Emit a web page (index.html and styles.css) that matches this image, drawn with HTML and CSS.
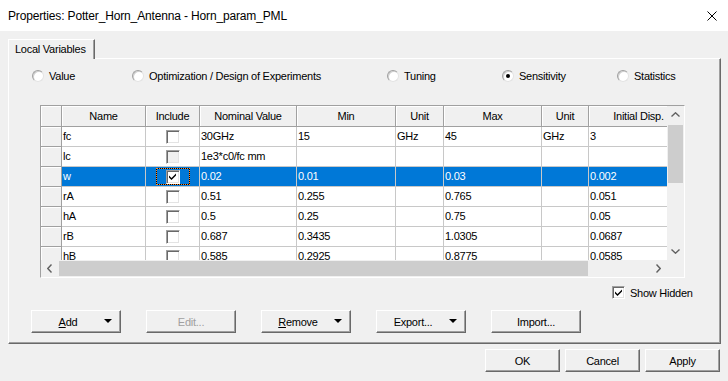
FILE: index.html
```html
<!DOCTYPE html>
<html lang="en">
<head>
  <meta charset="UTF-8" />
  <meta name="viewport" content="width=device-width, initial-scale=1.0"/>
  <title>Properties: Potter_Horn_Antenna - Horn_param_PML</title>
  <link rel="stylesheet" href="styles.css">
</head>
<body>
  <div class="dialog">
    <div class="titlebar">
      <span>Properties: Potter_Horn_Antenna - Horn_param_PML</span>
      <svg class="close" width="10" height="10" viewBox="0 0 10 10"><path d="M0.5 0.5 L9.5 9.5 M9.5 0.5 L0.5 9.5" stroke="#000" stroke-width="1"/></svg>
    </div>

    <div class="tabs">
      <div class="tab">Local Variables</div>
    </div>

    <div class="panel">
      <div class="modes">
        <label class="radio"><span class="dot"></span>Value</label>
        <label class="radio"><span class="dot"></span>Optimization / Design of Experiments</label>
        <label class="radio"><span class="dot"></span>Tuning</label>
        <label class="radio"><span class="dot on"></span>Sensitivity</label>
        <label class="radio"><span class="dot"></span>Statistics</label>
      </div>

      <div class="grid-frame">
        <div class="grid-view">
          <div id="grid-table" class="grid-table"></div>
        </div>
        <div class="vscroll">
          <div class="sb-btn"><svg width="9" height="5" viewBox="0 0 9 5"><polyline points="0.5,4.5 4.5,0.8 8.5,4.5" fill="none" stroke="#606060" stroke-width="1.4"/></svg></div>
          <div class="vthumb"></div>
          <div class="sb-fill"></div>
          <div class="sb-btn"><svg width="9" height="5" viewBox="0 0 9 5"><polyline points="0.5,0.5 4.5,4.2 8.5,0.5" fill="none" stroke="#606060" stroke-width="1.4"/></svg></div>
        </div>
        <div class="hscroll">
          <div class="sb-btn"><svg width="5" height="9" viewBox="0 0 5 9"><polyline points="4.5,0.5 0.8,4.5 4.5,8.5" fill="none" stroke="#606060" stroke-width="1.4"/></svg></div>
          <div class="hthumb"></div>
          <div class="sb-fill"></div>
          <div class="sb-btn"><svg width="5" height="9" viewBox="0 0 5 9"><polyline points="0.5,0.5 4.2,4.5 0.5,8.5" fill="none" stroke="#606060" stroke-width="1.4"/></svg></div>
        </div>
        <div class="corner"></div>
      </div>

      <div class="show-hidden">
        <span class="cb checked"><svg width="8" height="7" viewBox="0 0 8 7"><path d="M0 2.5 L2.5 5 L7 0.5 L7 2.5 L2.5 7 L0 4.5 Z"/></svg></span>
        Show Hidden
      </div>

      <div class="actions">
        <div class="btn drop"><span class="label"><u>A</u>dd</span><span class="caret"></span></div>
        <div class="btn disabled"><span class="label">Edit...</span></div>
        <div class="btn drop"><span class="label"><u>R</u>emove</span><span class="caret"></span></div>
        <div class="btn drop"><span class="label">Export...</span><span class="caret"></span></div>
        <div class="btn"><span class="label">Import...</span></div>
      </div>
    </div>

    <div class="footer">
      <div class="btn small"><span class="label">OK</span></div>
      <div class="btn small"><span class="label">Cancel</span></div>
      <div class="btn small"><span class="label">Apply</span></div>
    </div>
  </div>

  <script>
    const columns = ['Name', 'Include', 'Nominal Value', 'Min', 'Unit', 'Max', 'Unit', 'Initial Disp.'];

    const variables = [
      { name: 'fc', include: 'off', values: ['30GHz', '15', 'GHz', '45', 'GHz', '3'] },
      { name: 'lc', include: 'disabled', values: ['1e3*c0/fc mm', '', '', '', '', ''] },
      { name: 'w', include: 'on', selected: true, values: ['0.02', '0.01', '', '0.03', '', '0.002'] },
      { name: 'rA', include: 'off', values: ['0.51', '0.255', '', '0.765', '', '0.051'] },
      { name: 'hA', include: 'off', values: ['0.5', '0.25', '', '0.75', '', '0.05'] },
      { name: 'rB', include: 'off', values: ['0.687', '0.3435', '', '1.0305', '', '0.0687'] },
      { name: 'hB', include: 'off', values: ['0.585', '0.2925', '', '0.8775', '', '0.0585'] }
    ];

    const tick = '<svg width="8" height="7" viewBox="0 0 8 7"><path d="M0 2.5 L2.5 5 L7 0.5 L7 2.5 L2.5 7 L0 4.5 Z"/></svg>';

    function checkbox(state, focused) {
      const box = `<span class="cb ${state === 'on' ? 'checked' : ''} ${state === 'disabled' ? 'disabled' : ''}">${state === 'on' ? tick : ''}</span>`;
      return focused ? `<span class="focus">${box}</span>` : box;
    }

    function renderGrid() {
      const head = `<div class="row head"><div class="cell"></div>${columns.map(c => `<div class="cell">${c}</div>`).join('')}</div>`;
      const body = variables.map(v => `
        <div class="row ${v.selected ? 'selected' : ''}">
          <div class="cell rh"></div>
          <div class="cell">${v.name}</div>
          <div class="cell inc">${checkbox(v.include, v.selected)}</div>
          ${v.values.map(x => `<div class="cell">${x}</div>`).join('')}
        </div>
      `).join('');
      document.getElementById('grid-table').innerHTML = head + body;
    }

    renderGrid();
  </script>
</body>
</html>
```

FILE: styles.css
```css
body {
  margin: 0;
  background: #f0f0f0;
  font-family: "Liberation Sans", Arial, sans-serif;
  font-size: 11px;
  letter-spacing: -0.25px;
  color: #000;
}
.dialog {
  width: 728px;
  height: 381px;
  overflow: hidden;
}
.titlebar {
  height: 31px;
  background: #fff;
  display: flex;
  align-items: center;
  justify-content: space-between;
  padding: 0 11px 0 8px;
  font-size: 12px;
  letter-spacing: -0.15px;
}

/* tab strip */
.tabs {
  display: flex;
  padding: 8px 0 0 8px;
  margin-bottom: -1px;
}
.tab {
  position: relative;
  z-index: 1;
  width: 87px;
  height: 20px;
  box-sizing: border-box;
  padding-left: 6px;
  line-height: 19px;
  background: #f0f0f0;
  border-top: 1px solid #fff;
  border-left: 1px solid #fff;
  border-right: 1px solid #696969;
  box-shadow: inset -1px 0 #a0a0a0;
}
.panel {
  margin: 0 7px 0 8px;
  border: 1px solid;
  border-color: #fff #696969 #696969 #fff;
  box-shadow: inset -1px -1px #a0a0a0;
  padding-bottom: 10px;
}

/* radio row */
.modes {
  display: grid;
  grid-template-columns: 100px 255px 115px 115px 1fr;
  margin: 10px 0 0 23px;
  height: 14px;
  line-height: 14px;
}
.radio {
  display: flex;
  align-items: center;
  gap: 5px;
  white-space: nowrap;
}
.dot {
  width: 12px;
  height: 12px;
  box-sizing: border-box;
  border-radius: 50%;
  border: 1px solid;
  border-color: #a0a0a0 #e3e3e3 #e3e3e3 #a0a0a0;
  background: #fff;
  box-shadow: inset 1px 1px #d0d0d0;
  display: flex;
  align-items: center;
  justify-content: center;
}
.dot.on::after {
  content: "";
  width: 4px;
  height: 4px;
  border-radius: 50%;
  background: #000;
}

/* variable grid */
.grid-frame {
  margin: 22px 0 0 31px;
  width: 645px;
  height: 173px;
  box-sizing: border-box;
  border: 1px solid;
  border-color: #a0a0a0 #fff #fff #a0a0a0;
  display: grid;
  grid-template-columns: 626px 17px;
  grid-template-rows: 154px 17px;
  background: #f0f0f0;
}
.grid-view {
  overflow: hidden;
  background: #fff;
}
.grid-table {
  width: 648px;
}
.row {
  display: grid;
  grid-template-columns: 21px 84px 54px 97px 99px 48px 98px 47px 100px;
  height: 20px;
}
.row.head {
  height: 21px;
}
.cell {
  box-sizing: border-box;
  border-right: 1px solid #c8c8c8;
  border-bottom: 1px solid #c8c8c8;
  padding: 0 1px;
  line-height: 19px;
  white-space: nowrap;
  overflow: hidden;
  background: #fff;
}
.head .cell {
  background: #f0f0f0;
  border-color: #a0a0a0;
  box-shadow: inset 1px 1px #fff;
  text-align: center;
  line-height: 20px;
}
.cell.rh {
  background: #f0f0f0;
  border-color: #a0a0a0;
  box-shadow: inset 1px 1px #fff;
}
.selected .cell:not(.rh) {
  background: #0078d7;
  color: #fff;
}
.cell.inc {
  display: flex;
  align-items: center;
  justify-content: center;
  padding: 0;
}
.focus {
  width: 34px;
  height: 17px;
  box-sizing: border-box;
  border: 1px dotted #ff8727;
  background: #000;
  box-shadow: inset 0 0 0 20px #0078d7;
  display: flex;
  align-items: center;
  justify-content: center;
}
.cb {
  width: 14px;
  height: 14px;
  box-sizing: border-box;
  border: 1px solid;
  border-color: #a0a0a0 #fff #fff #a0a0a0;
  box-shadow: inset 1px 1px #696969, inset -1px -1px #e3e3e3;
  background: #fff;
  display: flex;
  align-items: center;
  justify-content: center;
}
.cb.disabled {
  background: #f0f0f0;
}
.cb svg {
  fill: #000;
}

/* scrollbars */
.vscroll {
  display: flex;
  flex-direction: column;
}
.hscroll {
  display: flex;
}
.sb-btn {
  width: 17px;
  height: 17px;
  flex: none;
  display: flex;
  align-items: center;
  justify-content: center;
}
.sb-fill {
  flex: 1;
}
.vthumb {
  margin: 2px 1px 0;
  height: 58px;
  background: #cdcdcd;
}
.hthumb {
  margin: 1px 0 1px 1px;
  width: 529px;
  background: #cdcdcd;
}

/* lower controls */
.show-hidden {
  display: flex;
  align-items: center;
  gap: 5px;
  margin: 8px 0 0 603px;
  height: 13px;
}
.show-hidden .cb {
  width: 13px;
  height: 13px;
}
.actions {
  display: flex;
  gap: 25px;
  margin: 11px 0 0 22px;
}
.btn {
  width: 90px;
  height: 23px;
  box-sizing: border-box;
  border: 1px solid;
  border-color: #fff #696969 #696969 #fff;
  box-shadow: inset -1px -1px #a0a0a0;
  background: #f0f0f0;
  display: flex;
  align-items: center;
}
.btn .label {
  flex: 1;
  text-align: center;
}
.btn.disabled {
  color: #a0a0a0;
}
.caret {
  width: 0;
  height: 0;
  margin: 0 8px 1px 0;
  border-left: 4px solid transparent;
  border-right: 4px solid transparent;
  border-top: 4px solid #000;
}
.footer {
  display: flex;
  justify-content: flex-end;
  gap: 5px;
  margin-top: 5px;
  padding-right: 8px;
}
.btn.small {
  width: 75px;
}
```
